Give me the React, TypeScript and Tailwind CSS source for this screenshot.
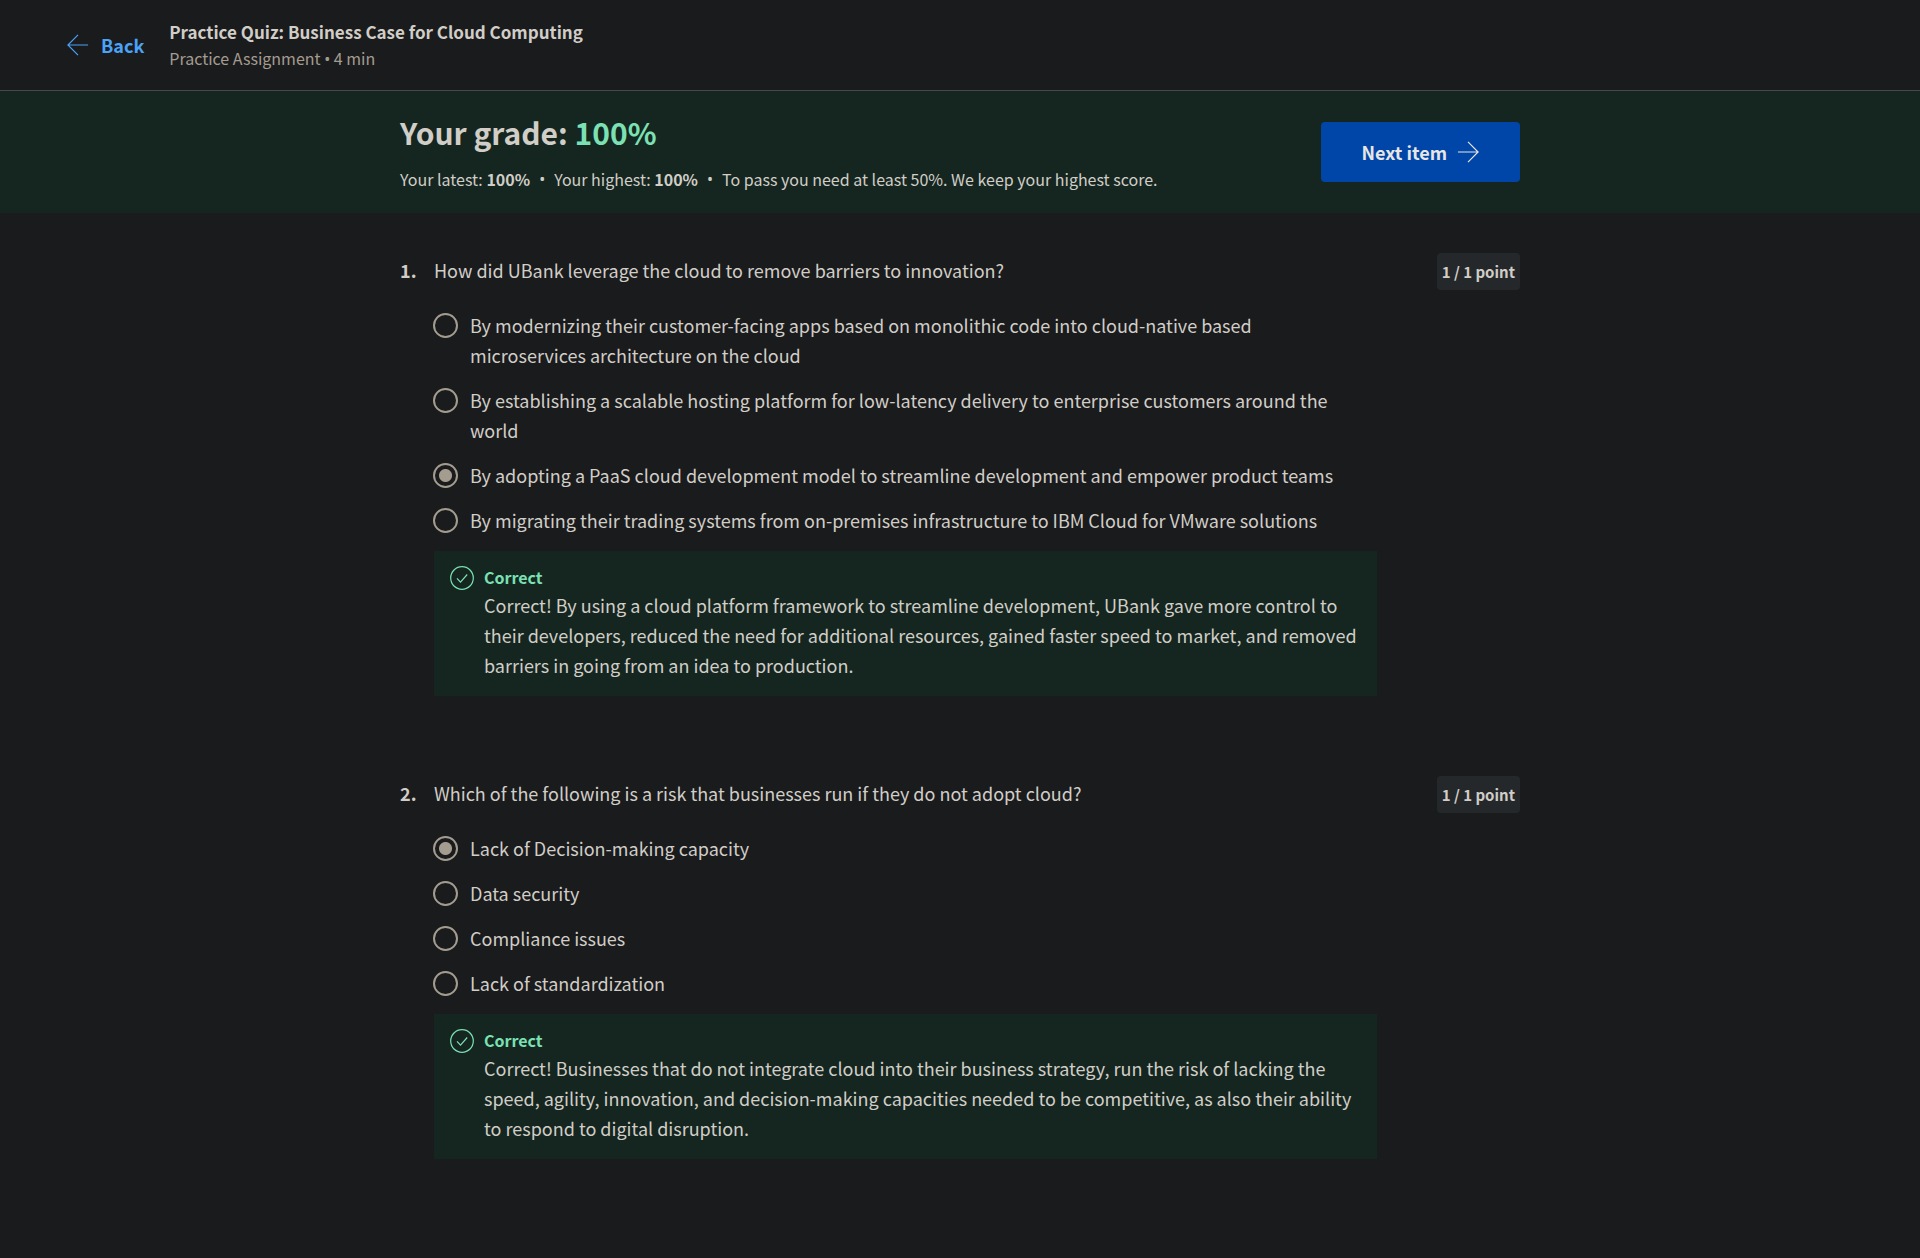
type Question = {
  text: string;
  options: string[];
  selected: number;
  feedback: string;
};

const questions: Question[] = [
  {
    text: "How did UBank leverage the cloud to remove barriers to innovation?",
    options: [
      "By modernizing their customer-facing apps based on monolithic code into cloud-native based microservices architecture on the cloud",
      "By establishing a scalable hosting platform for low-latency delivery to enterprise customers around the world",
      "By adopting a PaaS cloud development model to streamline development and empower product teams",
      "By migrating their trading systems from on-premises infrastructure to IBM Cloud for VMware solutions",
    ],
    selected: 2,
    feedback:
      "Correct! By using a cloud platform framework to streamline development, UBank gave more control to their developers, reduced the need for additional resources, gained faster speed to market, and removed barriers in going from an idea to production.",
  },
  {
    text: "Which of the following is a risk that businesses run if they do not adopt cloud?",
    options: [
      "Lack of Decision-making capacity",
      "Data security",
      "Compliance issues",
      "Lack of standardization",
    ],
    selected: 0,
    feedback:
      "Correct! Businesses that do not integrate cloud into their business strategy, run the risk of lacking the speed, agility, innovation, and decision-making capacities needed to be competitive, as also their ability to respond to digital disruption.",
  },
];

function ArrowIcon({ className }: { className: string }) {
  return (
    <svg viewBox="0 0 24 24" fill="none" stroke="currentColor" strokeWidth="1.3" className={className} aria-hidden="true">
      <path d="M1 12H23M12 1l11 11-11 11" />
    </svg>
  );
}

function CheckCircleIcon() {
  return (
    <svg viewBox="0 0 24 24" fill="none" stroke="currentColor" strokeWidth="1.2" className="mt-px h-6 w-6 shrink-0 text-[#7be0b3]" aria-hidden="true">
      <circle cx="12" cy="12" r="11.3" />
      <path d="M7 12.3l3.5 3.9 6.7-7.7" />
    </svg>
  );
}

function Bullet() {
  return <span className="font-['Noto_Sans',sans-serif]">•</span>;
}

function QuestionBlock({ question, number }: { question: Question; number: number }) {
  return (
    <section>
      <div className="flex items-start">
        <span className="w-[34px] shrink-0 pt-[2px] text-lg leading-[30px] font-bold">{number}.</span>
        <h2 id={`question-${number}`} className="flex-1 pt-[2px] text-lg leading-[30px]">
          {question.text}
        </h2>
        <span className="rounded bg-[#25282a] px-[5px] text-[15px] leading-[37px] font-bold">1 / 1 point</span>
      </div>
      <div className="mr-[143px] ml-[34px]">
        <div role="radiogroup" aria-labelledby={`question-${number}`} className="mt-5 mr-2 flex flex-col gap-[15px]">
          {question.options.map((option, i) => (
            <label key={option} className="flex items-start gap-3 text-lg leading-[30px]">
              <input
                type="radio"
                name={`question-${number}`}
                defaultChecked={i === question.selected}
                className="mt-[3px] -ml-px h-[25px] w-[25px] shrink-0 appearance-none rounded-full border-2 border-[#a59c90] checked:bg-[radial-gradient(circle,#a59c90_6px,transparent_7px)]"
              />
              <span>{option}</span>
            </label>
          ))}
        </div>
        <div className="mt-4 flex gap-[10px] bg-[#152620] px-4 pt-[14px] pb-4">
          <CheckCircleIcon />
          <div>
            <p className="text-base leading-[25px] font-bold text-[#7be0b3]">Correct</p>
            <p className="text-lg leading-[30px]">{question.feedback}</p>
          </div>
        </div>
      </div>
    </section>
  );
}

export default function App() {
  return (
    <div className="min-h-screen bg-[#1a1b1d] font-['Noto_Sans_CJK_SC','Noto_Sans',sans-serif] text-[#d1cdc7]">
      <header className="flex h-[91px] items-center gap-[25px] border-b border-[#46494b] px-[67px]">
        <a href="#" className="flex items-center gap-3 text-lg font-bold text-[#4ba3f7]">
          <ArrowIcon className="h-[22px] w-[22px] -scale-x-100" />
          Back
        </a>
        <div>
          <h1 className="text-[17px] leading-[27px] font-bold">Practice Quiz: Business Case for Cloud Computing</h1>
          <p className="text-base leading-[26px] text-[#a59c90]">
            Practice Assignment <Bullet /> 4 min
          </p>
        </div>
      </header>
      <div className="bg-[#152620] py-5">
        <div className="mx-auto flex max-w-[1120px] items-center justify-between">
          <div className="pb-[2px]">
            <p className="text-[30px] leading-[42px] font-bold">
              Your grade: <span className="text-[#7be0b3]">100%</span>
            </p>
            <p className="mt-[14px] flex gap-[9px] text-base leading-6">
              <span>
                Your latest: <b>100%</b>
              </span>
              <Bullet />
              <span>
                Your highest: <b>100%</b>
              </span>
              <Bullet />
              <span>To pass you need at least 50%. We keep your highest score.</span>
            </p>
          </div>
          <button type="button" className="flex h-15 items-center gap-[10px] rounded bg-[#0045a8] px-[41px] text-lg font-bold text-[#e8e6e3]">
            Next item
            <ArrowIcon className="h-[22px] w-[22px]" />
          </button>
        </div>
      </div>
      <main className="mx-auto flex max-w-[1120px] flex-col gap-20 pt-10 pb-24">
        {questions.map((question, i) => (
          <QuestionBlock key={question.text} question={question} number={i + 1} />
        ))}
      </main>
    </div>
  );
}
